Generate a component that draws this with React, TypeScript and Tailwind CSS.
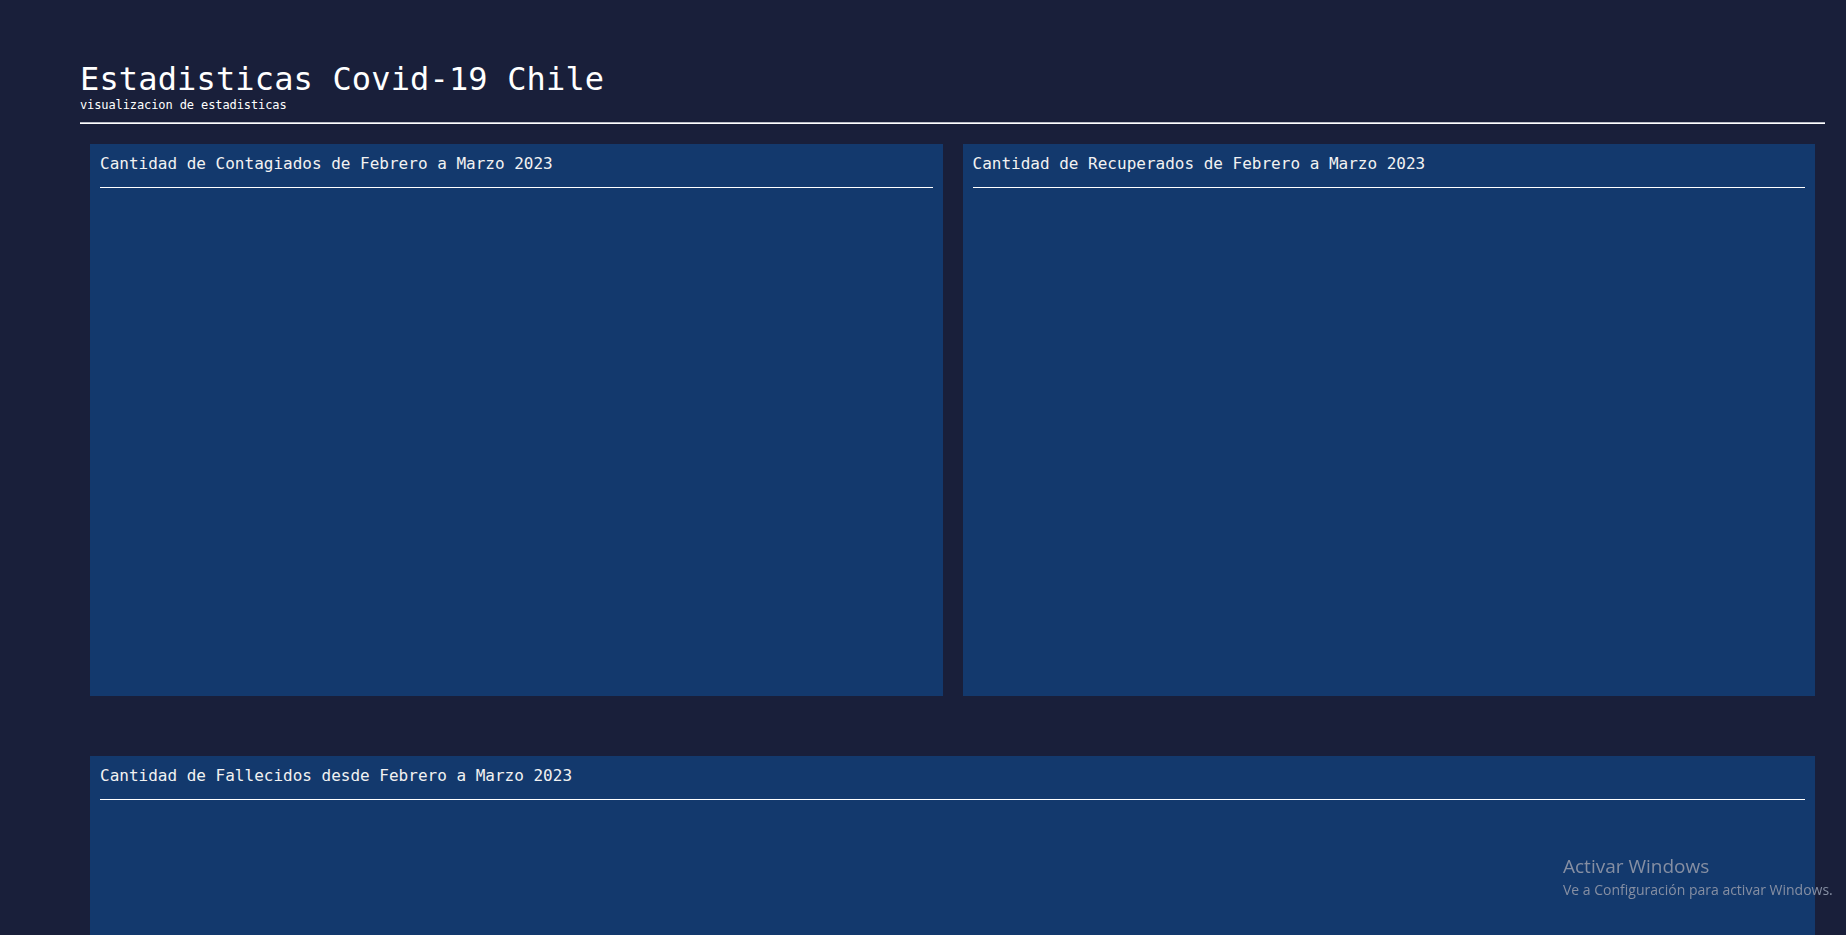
import React from 'react';

const mono = { fontFamily: '"DejaVu Sans Mono", "Liberation Mono", monospace' };

interface ChartCardProps {
  title: string;
}

// Card que contiene el titulo del grafico y el area (vacia) del grafico
const ChartCard: React.FC<ChartCardProps> = ({ title }) => (
  <section className="bg-[#13396d] h-[552px] p-[10px]">
    <h3 className="text-[16px] leading-[19px] text-[#f2f2f2] font-normal">{title}</h3>
    <div className="mt-[14px] h-px bg-white"></div>
    <div className="flex-1"></div>
  </section>
);

const App: React.FC = () => {
  return (
    <div className="min-h-screen bg-[#191f3a] text-white" style={mono}>
      <div className="pl-[80px] pr-[21px] pt-[61px] pb-[40px]">
        {/* Encabezado */}
        <header>
          <h1 className="text-[32px] leading-[37px] tracking-[0.15px] font-normal text-white">Estadisticas Covid-19 Chile</h1>
          <p className="text-[12px] leading-[14px] tracking-[-0.1px] text-white">visualizacion de estadisticas</p>
        </header>
        <div className="mt-[10px] border-t border-t-[#b9bcc6] border-b border-b-white"></div>

        {/* Graficos */}
        <div className="px-[10px] pt-[20px]">
          <div className="grid grid-cols-2 gap-[20px]">
            <ChartCard title="Cantidad de Contagiados de Febrero a Marzo 2023" />
            <ChartCard title="Cantidad de Recuperados de Febrero a Marzo 2023" />
          </div>
          <div className="mt-[60px]">
            <ChartCard title="Cantidad de Fallecidos desde Febrero a Marzo 2023" />
          </div>
        </div>
      </div>

      {/* Marca de agua de Windows */}
      <div
        className="fixed left-[1563px] top-[853px] text-[#868fa3] pointer-events-none"
        style={{ fontFamily: '"Open Sans", "Noto Sans", sans-serif' }}
      >
        <p className="text-[19px] leading-[27px]">Activar Windows</p>
        <p className="text-[14px] leading-[20px] whitespace-nowrap">Ve a Configuración para activar Windows.</p>
      </div>
    </div>
  );
};

export default App;
